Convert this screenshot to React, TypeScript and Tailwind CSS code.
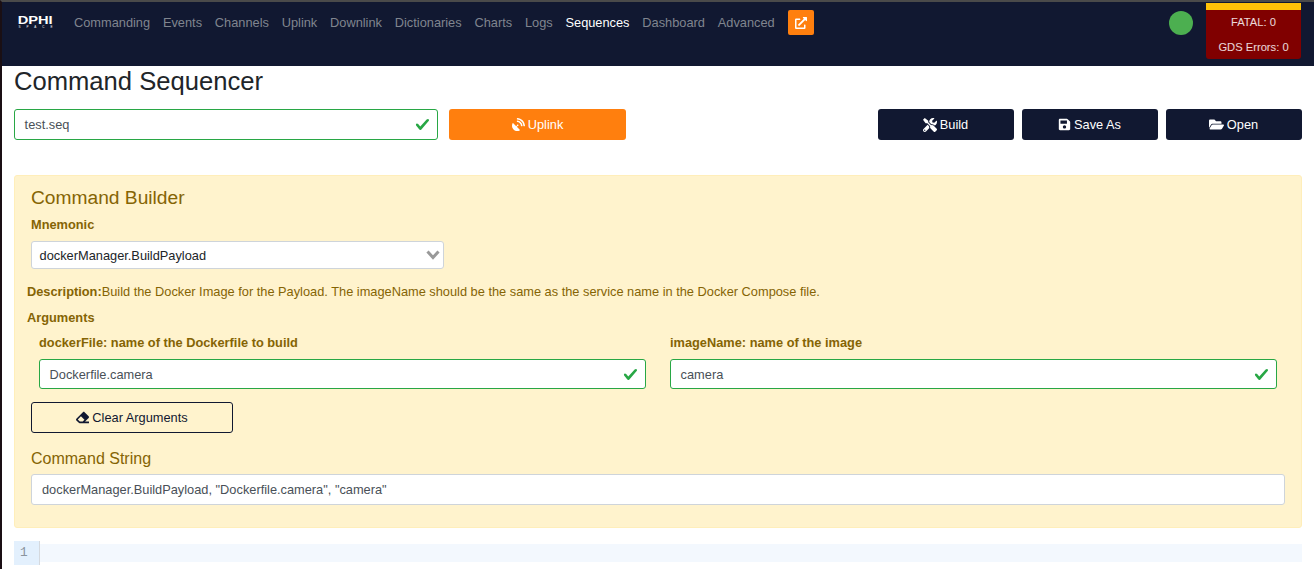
import { FaEraser, FaExternalLinkAlt, FaFolderOpen, FaSatelliteDish, FaSave, FaTools } from "react-icons/fa";

const navLinks = ["Commanding", "Events", "Channels", "Uplink", "Downlink", "Dictionaries", "Charts", "Logs", "Sequences", "Dashboard", "Advanced"];

function ValidCheck() {
    return (
        <svg viewBox="0 0 8 8" className="absolute right-[7px] top-[7px] h-[15px] w-[15px]" fill="#28a745">
            <path d="M2.3 6.73L.6 4.53c-.4-1.04.46-1.4 1.1-.8l1.1 1.4 3.4-3.8c.6-.63 1.6-.27 1.2.7l-4 4.6c-.43.5-.8.4-1.1.1z" />
        </svg>
    );
}

function ValidInput({ value, className }: { value: string; className: string }) {
    return (
        <div className={`relative flex items-center rounded-[3px] border border-[#28a745] bg-white pl-[9.6px] text-[#495057] ${className}`}>
            {value}
            <ValidCheck />
        </div>
    );
}

function NavyButton({ icon, label }: { icon: React.ReactNode; label: string }) {
    return (
        <button className="flex h-[31px] w-[136px] items-center justify-center gap-[3px] rounded-[3px] bg-[#111831] pr-[1px] text-white">
            {icon}
            {label}
        </button>
    );
}

export default function App() {
    return (
        <div className="h-[569px] overflow-hidden border-t-2 border-l-2 border-t-[#4a4a4a] border-l-[#1a0f14] bg-white font-['Liberation_Sans',sans-serif] text-[12.8px] leading-[19.2px]">
            <nav className="flex h-[64px] bg-[#111831]">
                <div className="ml-[16px] mt-[13px] flex h-[14px] w-[35px] flex-col items-center text-white">
                    <span className="scale-x-[1.33] text-[11px] leading-[10px] font-bold">DPHI</span>
                    <span className="ml-[6px] text-[3px] leading-[4px] tracking-[6px]">SPACE</span>
                </div>
                <ul className="ml-[21px] flex h-[42px] items-center gap-[12.8px]">
                    {navLinks.map((link) => (
                        <li key={link} className={link === "Sequences" ? "text-white" : "text-[#80858f]"}>
                            {link}
                        </li>
                    ))}
                </ul>
                <button className="mt-[8px] ml-[13px] flex h-[25px] w-[26px] items-center justify-center rounded-[2px] bg-[#ff7f0e] text-white">
                    <FaExternalLinkAlt size={12} />
                </button>
                <div className="mt-[9px] ml-auto h-[24px] w-[24px] rounded-full bg-[#4caf50]" />
                <div className="mt-[1px] mr-[13px] ml-[13px] flex h-[56px] w-[95px] flex-col rounded-b-[3px] border-t-[7px] border-t-[#ffc107] bg-[#800000] text-[11.2px] text-white/85">
                    <span className="mt-[2px] text-center leading-[21px]">FATAL: 0</span>
                    <span className="mt-[4px] text-center leading-[21px]">GDS Errors: 0</span>
                </div>
            </nav>

            <main className="pr-[12px] pl-[12px]">
                <h2 className="text-[25.6px] leading-[31px] font-normal text-[#212529]">Command Sequencer</h2>

                <div className="mt-[12px] flex">
                    <ValidInput value="test.seq" className="h-[31px] w-[424px]" />
                    <button className="ml-[11px] flex h-[31px] w-[177px] items-center justify-center gap-[3px] rounded-[3px] bg-[#ff7f0e] text-white">
                        <FaSatelliteDish size={13} />
                        Uplink
                    </button>
                    <div className="ml-auto flex gap-[8px]">
                        <NavyButton icon={<FaTools size={14} />} label="Build" />
                        <NavyButton icon={<FaSave size={13} />} label="Save As" />
                        <NavyButton icon={<FaFolderOpen size={15} />} label="Open" />
                    </div>
                </div>

                <section className="mt-[35px] h-[353px] rounded-[3px] border border-[#ffeeba] bg-[#fff3cd] px-[16px] pt-[10px] text-[#856404]">
                    <h4 className="text-[19.2px] leading-[23px] font-normal">Command Builder</h4>
                    <p className="mt-[6px] font-bold">Mnemonic</p>
                    <div className="mt-[7px] flex h-[28px] w-[413px] items-center justify-between rounded-[3px] border border-[#ced4da] bg-white pr-[3px] pl-[7.6px] text-[#212529]">
                        dockerManager.BuildPayload
                        <svg viewBox="0 0 14 10" className="h-[10px] w-[14px]" fill="none" stroke="#999999" strokeWidth="3">
                            <path d="M1.5 1.5 7 7.5l5.500-6" />
                        </svg>
                    </div>
                    <p className="-ml-[4px] mt-[13px]">
                        <b>Description:</b>Build the Docker Image for the Payload. The imageName should be the same as the service name in the Docker Compose file.
                    </p>
                    <p className="-ml-[4px] mt-[7px] font-bold">Arguments</p>
                    <div className="mt-[5px] ml-[8px] flex gap-[24px]">
                        <div>
                            <p className="font-bold">dockerFile: name of the Dockerfile to build</p>
                            <ValidInput value="Dockerfile.camera" className="mt-[7px] h-[30px] w-[607px] pt-[1px]" />
                        </div>
                        <div>
                            <p className="font-bold">imageName: name of the image</p>
                            <ValidInput value="camera" className="mt-[7px] h-[30px] w-[607px] pt-[1px]" />
                        </div>
                    </div>
                    <button className="mt-[13px] flex h-[31px] w-[202px] items-center justify-center gap-[3px] rounded-[3px] border border-[#111831] text-[#111831]">
                        <FaEraser size={13} />
                        Clear Arguments
                    </button>
                    <h5 className="mt-[16px] text-[16px] leading-[20px] font-normal">Command String</h5>
                    <div className="mt-[5px] flex h-[31px] w-[1254px] items-center rounded-[3px] border border-[#ced4da] bg-white pl-[10px] text-[#495057]">
                        dockerManager.BuildPayload, "Dockerfile.camera", "camera"
                    </div>
                </section>

                <div className="mt-[13px] flex h-[24px]">
                    <div className="w-[26px] border-r border-r-[#d5d9de] bg-[#e3f0fd] pt-[2px] pl-[6px] font-['Liberation_Mono',monospace] text-[#8a949e]">1</div>
                    <div className="mt-[3px] h-[18px] flex-1 bg-[#f3f8fe]" />
                </div>
            </main>
        </div>
    );
}
